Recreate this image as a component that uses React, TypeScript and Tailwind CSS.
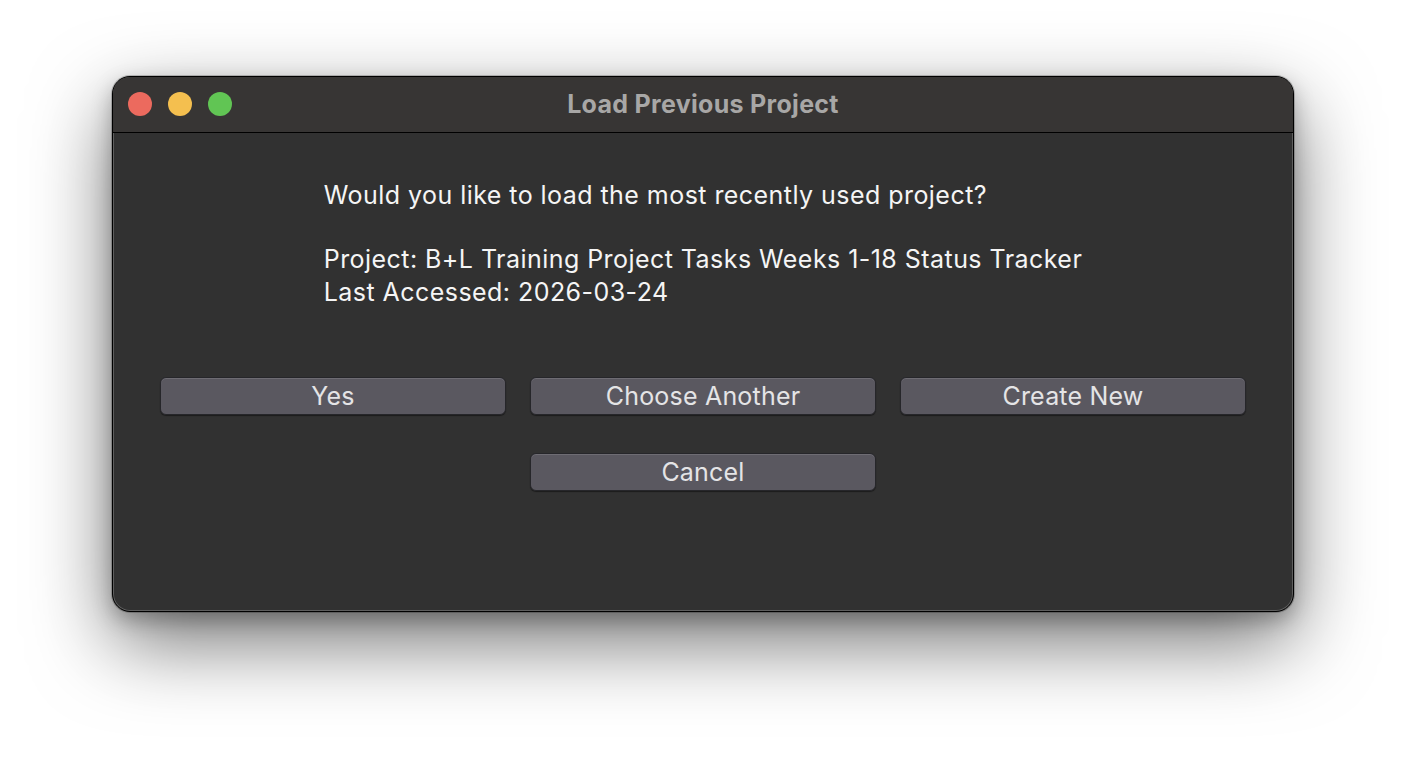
import React from "react";

function Btn({ label }: { label: string }) {
  return (
    <button className="h-[38px] w-full rounded-[6px] bg-[#5a5860] text-[25px] leading-[36px] tracking-[0.2px] text-[#e4e4e6] shadow-[inset_0_1px_0_rgba(255,255,255,0.12),0_1px_1px_rgba(0,0,0,0.45)] border border-[#26262a]">
      {label}
    </button>
  );
}

export default function App() {
  return (
    <div
      className="flex h-[760px] w-[1406px] justify-center bg-white pt-[76px]"
      style={{ fontFamily: "Inter, 'Noto Sans', sans-serif" }}
    >
      <div className="flex h-[536px] w-[1182px] flex-col overflow-hidden rounded-[18px] border border-black bg-[#313131] shadow-[0_0_0_1px_rgba(0,0,0,0.2),0_30px_80px_rgba(0,0,0,0.55),0_8px_20px_rgba(0,0,0,0.25)]">
        <div className="flex flex-1 flex-col rounded-[17px] shadow-[inset_0_0_0_1px_rgba(255,255,255,0.22)]">
          <div className="relative flex h-[56px] shrink-0 items-center justify-center border-b border-black bg-[#373534]">
            <div className="absolute left-[15px] top-[15px] flex gap-[16px]">
              <span className="h-[24px] w-[24px] rounded-full bg-[#ec6a5e]" />
              <span className="h-[24px] w-[24px] rounded-full bg-[#f4bf4f]" />
              <span className="h-[24px] w-[24px] rounded-full bg-[#61c554]" />
            </div>
            <span className="text-[25px] font-bold tracking-[0.3px] text-[#a8a7a6]">Load Previous Project</span>
          </div>
          <div className="flex flex-col px-[47px] pt-[46px]">
            <div className="mx-auto w-fit text-[25px] leading-[33px] tracking-[0.45px] text-[#f5f5f5]">
              <p>Would you like to load the most recently used project?</p>
              <p className="mt-[31px]">Project: B+L Training Project Tasks Weeks 1-18 Status Tracker</p>
              <p>Last Accessed: 2026-03-24</p>
            </div>
            <div className="mt-[68px] grid grid-cols-3 gap-x-[24px] gap-y-[38px]">
              <Btn label="Yes" />
              <Btn label="Choose Another" />
              <Btn label="Create New" />
              <div />
              <Btn label="Cancel" />
              <div />
            </div>
          </div>
        </div>
      </div>
    </div>
  );
}
